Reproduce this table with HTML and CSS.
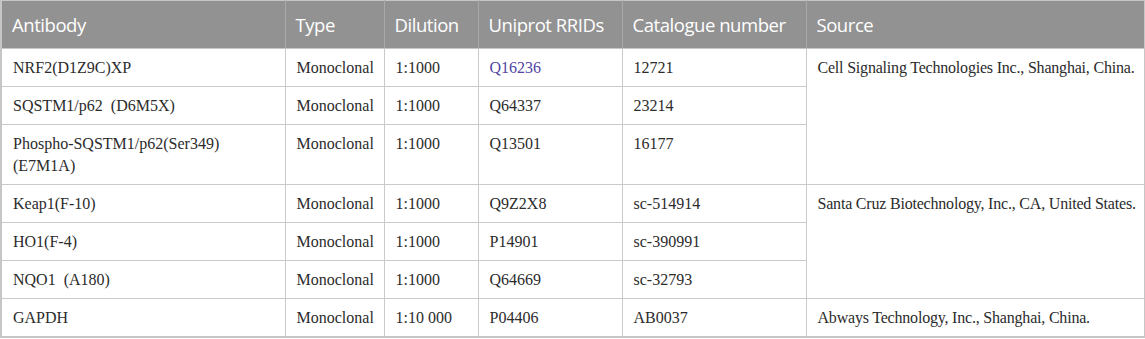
FILE: index.html
```html
<!DOCTYPE html>
<html>
<head>
<meta charset="utf-8">
<link rel="stylesheet" href="styles.css">
</head>
<body>
<table class="ab-table">
  <colgroup>
    <col class="c-ab"><col class="c-type"><col class="c-dil"><col class="c-uni"><col class="c-cat"><col class="c-src">
  </colgroup>
  <thead>
    <tr>
      <th>Antibody</th><th>Type</th><th>Dilution</th><th>Uniprot RRIDs</th><th>Catalogue number</th><th>Source</th>
    </tr>
  </thead>
  <tbody>
    <tr>
      <td>NRF2(D1Z9C)XP</td><td>Monoclonal</td><td>1:1000</td><td><a class="link" href="#">Q16236</a></td><td>12721</td>
      <td class="src" rowspan="3">Cell Signaling Technologies Inc., Shanghai, China.</td>
    </tr>
    <tr>
      <td>SQSTM1/p62&nbsp;&nbsp;(D6M5X)</td><td>Monoclonal</td><td>1:1000</td><td>Q64337</td><td>23214</td>
    </tr>
    <tr>
      <td>Phospho-SQSTM1/p62(Ser349)<br>(E7M1A)</td><td>Monoclonal</td><td>1:1000</td><td>Q13501</td><td>16177</td>
    </tr>
    <tr>
      <td>Keap1(F-10)</td><td>Monoclonal</td><td>1:1000</td><td>Q9Z2X8</td><td>sc-514914</td>
      <td class="src" rowspan="3">Santa Cruz Biotechnology, Inc., CA, United States.</td>
    </tr>
    <tr>
      <td>HO1(F-4)</td><td>Monoclonal</td><td>1:1000</td><td>P14901</td><td>sc-390991</td>
    </tr>
    <tr>
      <td>NQO1&nbsp;&nbsp;(A180)</td><td>Monoclonal</td><td>1:1000</td><td>Q64669</td><td>sc-32793</td>
    </tr>
    <tr>
      <td>GAPDH</td><td>Monoclonal</td><td>1:10 000</td><td>P04406</td><td>AB0037</td>
      <td class="src">Abways Technology, Inc., Shanghai, China.</td>
    </tr>
  </tbody>
</table>
</body>
</html>
```
FILE: styles.css
```css
html, body {
  margin: 0;
  padding: 0;
  background: #ffffff;
}

.ab-table {
  border-collapse: collapse;
  table-layout: fixed;
  width: 1144px;
  border: 2px solid #c6c6c6;
  border-top: 1px solid #c6c6c6;
}

.c-ab { width: 284px; }
.c-type { width: 99px; }
.c-dil { width: 94px; }
.c-uni { width: 144px; }
.c-cat { width: 184px; }
.c-src { width: 339px; }

.ab-table th {
  background: #929292;
  color: #ffffff;
  font-family: "Open Sans", "Noto Sans", sans-serif;
  font-weight: 400;
  font-size: 18.5px;
  line-height: 24px;
  text-align: left;
  padding: 12px 10px 11px 10px;
  border-left: 1px solid #a9a9a9;
  border-bottom: 1px solid #c6c6c6;
  white-space: nowrap;
  letter-spacing: -0.45px;
}

.ab-table th:first-child {
  border-left: none;
}

.ab-table td {
  font-family: "Liberation Serif", "Times New Roman", serif;
  font-size: 16px;
  line-height: 22px;
  color: #2b2b2b;
  text-align: left;
  vertical-align: top;
  padding: 8px 10px 7px 11px;
  border: 1px solid #cacaca;
}

.ab-table td.src {
  white-space: nowrap;
  padding-right: 4px;
  letter-spacing: -0.2px;
}

.link {
  color: #4f46a5;
  text-decoration: none;
}
```
